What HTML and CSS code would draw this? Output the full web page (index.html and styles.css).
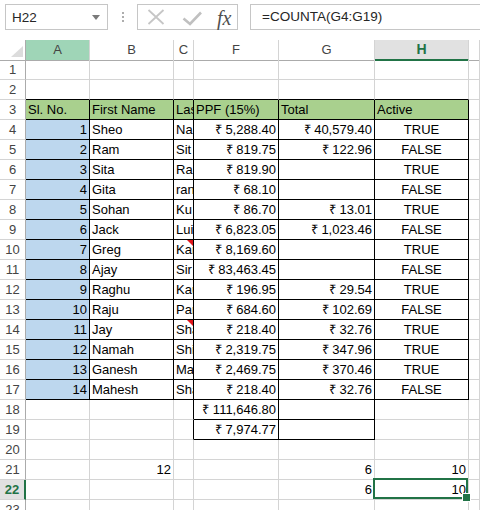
FILE: index.html
```html
<!DOCTYPE html>
<html>
<head>
<meta charset="utf-8">
<title>Sheet</title>
<link rel="stylesheet" href="styles.css">
</head>
<body>
<div class="fbar">
  <div class="namebox"><span>H22</span><svg class="dd" width="8" height="5" viewBox="0 0 8 5"><path d="M0 0H8L4 5Z" fill="#7a7a7a"/></svg></div>
  <div class="grip"><i></i><i></i><i></i></div>
  <div class="fxbox">
    <svg class="ix" width="18" height="16" viewBox="0 0 18 16"><path d="M1.5 1L16.5 15M16.5 1L1.5 15" stroke="#c6c6c6" stroke-width="1.8" fill="none"/></svg>
    <svg class="ok" width="20" height="16" viewBox="0 0 20 16"><path d="M1.5 8.5L8 14L19 2.5" stroke="#c0c0c0" stroke-width="2.6" fill="none"/></svg>
    <span class="fx">fx</span>
  </div>
  <div class="formula">=COUNTA(G4:G19)</div>
</div>
<div class="sheet">
  <div class="row">
    <div class="corner"><svg width="12" height="11" viewBox="0 0 12 11"><path d="M12 0V11H0Z" fill="#dcdcdc"/></svg></div>
    <div class="ch cha">A</div><div class="ch">B</div><div class="ch">C</div><div class="ch">F</div><div class="ch">G</div><div class="ch chs">H</div><div class="ch"></div>
  </div>
  <div class="row"><div class="rh">1</div><div class="c"></div><div class="c"></div><div class="c"></div><div class="c"></div><div class="c"></div><div class="c"></div><div class="c"></div></div>
  <div class="row"><div class="rh">2</div><div class="c bb"></div><div class="c bb"></div><div class="c bb"></div><div class="c bb"></div><div class="c bb"></div><div class="c bb"></div><div class="c"></div></div>
  <div class="row"><div class="rh">3</div><div class="c bk hd">Sl. No.</div><div class="c bk hd">First Name</div><div class="c bk hd clip">Las</div><div class="c bk hd">PPF (15%)</div><div class="c bk hd">Total</div><div class="c bk hd">Active</div><div class="c"></div></div>
  <div class="row"><div class="rh">4</div><div class="c bk sl r">1</div><div class="c bk">Sheo</div><div class="c bk clip">Na</div><div class="c bk r">₹ 5,288.40</div><div class="c bk r">₹ 40,579.40</div><div class="c bk ctr">TRUE</div><div class="c"></div></div>
  <div class="row"><div class="rh">5</div><div class="c bk sl r">2</div><div class="c bk">Ram</div><div class="c bk clip">Sit</div><div class="c bk r">₹ 819.75</div><div class="c bk r">₹ 122.96</div><div class="c bk ctr">FALSE</div><div class="c"></div></div>
  <div class="row"><div class="rh">6</div><div class="c bk sl r">3</div><div class="c bk">Sita</div><div class="c bk clip">Ra</div><div class="c bk r">₹ 819.90</div><div class="c bk r"></div><div class="c bk ctr">TRUE</div><div class="c"></div></div>
  <div class="row"><div class="rh">7</div><div class="c bk sl r">4</div><div class="c bk">Gita</div><div class="c bk clip">ran</div><div class="c bk r">₹ 68.10</div><div class="c bk r"></div><div class="c bk ctr">FALSE</div><div class="c"></div></div>
  <div class="row"><div class="rh">8</div><div class="c bk sl r">5</div><div class="c bk">Sohan</div><div class="c bk clip">Ku</div><div class="c bk r">₹ 86.70</div><div class="c bk r">₹ 13.01</div><div class="c bk ctr">TRUE</div><div class="c"></div></div>
  <div class="row"><div class="rh">9</div><div class="c bk sl r">6</div><div class="c bk">Jack</div><div class="c bk clip">Lui</div><div class="c bk r">₹ 6,823.05</div><div class="c bk r">₹ 1,023.46</div><div class="c bk ctr">FALSE</div><div class="c"></div></div>
  <div class="row"><div class="rh">10</div><div class="c bk sl r">7</div><div class="c bk">Greg</div><div class="c bk clip cm">Kar</div><div class="c bk r">₹ 8,169.60</div><div class="c bk r"></div><div class="c bk ctr">TRUE</div><div class="c"></div></div>
  <div class="row"><div class="rh">11</div><div class="c bk sl r">8</div><div class="c bk">Ajay</div><div class="c bk clip">Sir</div><div class="c bk r">₹ 83,463.45</div><div class="c bk r"></div><div class="c bk ctr">FALSE</div><div class="c"></div></div>
  <div class="row"><div class="rh">12</div><div class="c bk sl r">9</div><div class="c bk">Raghu</div><div class="c bk clip">Kau</div><div class="c bk r">₹ 196.95</div><div class="c bk r">₹ 29.54</div><div class="c bk ctr">TRUE</div><div class="c"></div></div>
  <div class="row"><div class="rh">13</div><div class="c bk sl r">10</div><div class="c bk">Raju</div><div class="c bk clip">Par</div><div class="c bk r">₹ 684.60</div><div class="c bk r">₹ 102.69</div><div class="c bk ctr">FALSE</div><div class="c"></div></div>
  <div class="row"><div class="rh">14</div><div class="c bk sl r">11</div><div class="c bk">Jay</div><div class="c bk clip cm">Sha</div><div class="c bk r">₹ 218.40</div><div class="c bk r">₹ 32.76</div><div class="c bk ctr">TRUE</div><div class="c"></div></div>
  <div class="row"><div class="rh">15</div><div class="c bk sl r">12</div><div class="c bk">Namah</div><div class="c bk clip">Shi</div><div class="c bk r">₹ 2,319.75</div><div class="c bk r">₹ 347.96</div><div class="c bk ctr">TRUE</div><div class="c"></div></div>
  <div class="row"><div class="rh">16</div><div class="c bk sl r">13</div><div class="c bk">Ganesh</div><div class="c bk clip">Ma</div><div class="c bk r">₹ 2,469.75</div><div class="c bk r">₹ 370.46</div><div class="c bk ctr">TRUE</div><div class="c"></div></div>
  <div class="row"><div class="rh">17</div><div class="c bk sl r">14</div><div class="c bk">Mahesh</div><div class="c bk clip">Sha</div><div class="c bk r">₹ 218.40</div><div class="c bk r">₹ 32.76</div><div class="c bk ctr">FALSE</div><div class="c"></div></div>
  <div class="row"><div class="rh">18</div><div class="c"></div><div class="c"></div><div class="c br"></div><div class="c bk r">₹ 111,646.80</div><div class="c bk"></div><div class="c"></div><div class="c"></div></div>
  <div class="row"><div class="rh">19</div><div class="c"></div><div class="c"></div><div class="c br"></div><div class="c bk r">₹ 7,974.77</div><div class="c bk"></div><div class="c"></div><div class="c"></div></div>
  <div class="row"><div class="rh">20</div><div class="c"></div><div class="c"></div><div class="c"></div><div class="c"></div><div class="c"></div><div class="c"></div><div class="c"></div></div>
  <div class="row"><div class="rh">21</div><div class="c"></div><div class="c r">12</div><div class="c"></div><div class="c"></div><div class="c r">6</div><div class="c r">10</div><div class="c"></div></div>
  <div class="row"><div class="rh rhs">22</div><div class="c"></div><div class="c"></div><div class="c"></div><div class="c"></div><div class="c r">6</div><div class="c r sel">10</div><div class="c"></div></div>
  <div class="row"><div class="rh">23</div><div class="c"></div><div class="c"></div><div class="c"></div><div class="c"></div><div class="c"></div><div class="c"></div><div class="c"></div></div>
</div>
</body>
</html>
```
FILE: styles.css
```css
* { box-sizing: border-box; }
html, body { margin: 0; padding: 0; background: #fff; }
body {
  width: 480px;
  height: 510px;
  overflow: hidden;
  font-family: "Liberation Sans", Arial, sans-serif;
  font-size: 13px;
  color: #000;
}

/* formula bar */
.fbar {
  height: 40px;
  display: flex;
  align-items: flex-start;
  padding-top: 4px;
}
.namebox {
  margin-left: 5px;
  width: 103px;
  height: 26px;
  border: 1px solid #c6c6c6;
  display: flex;
  align-items: center;
  padding: 0 6px 0 6px;
  color: #262626;
  font-size: 13.5px;
}
.namebox .dd { margin-left: auto; margin-right: 1px; }
.grip {
  width: 29px;
  height: 26px;
  display: flex;
  flex-direction: column;
  align-items: center;
  justify-content: center;
  gap: 2px;
}
.grip i { display: block; width: 2px; height: 2px; background: #adadad; }
.fxbox {
  width: 101px;
  height: 26px;
  border: 1px solid #c6c6c6;
  display: flex;
  align-items: center;
  padding-left: 9px;
}
.fxbox .ok { margin-left: 17px; margin-top: 1px; }
.fxbox .fx {
  margin-left: 15px;
  font-family: "Liberation Serif", "Times New Roman", serif;
  font-style: italic;
  font-size: 20px;
  color: #505050;
  line-height: 20px;
  margin-top: 2px;
}
.formula {
  margin-left: 12px;
  flex: 1;
  margin-right: -12px;
  height: 26px;
  border: 1px solid #c6c6c6;
  padding-left: 11px;
  line-height: 24px;
  font-size: 13.5px;
  color: #262626;
}

/* sheet */
.row {
  display: grid;
  grid-template-columns: 26px 64px 84px 20px 85px 96px 94px 1fr;
  height: 20px;
}
.c, .rh, .ch, .corner {
  border-right: 1px solid #d4d4d4;
  border-bottom: 1px solid #d4d4d4;
  white-space: nowrap;
  line-height: 19px;
  padding: 0 2px;
  position: relative;
}
.corner { border-right-color: #ababab; border-bottom-color: #ababab; display: flex; align-items: flex-end; justify-content: flex-end; padding: 0 2px 3px 0; }
.corner svg { display: block; }
.ch {
  text-align: center;
  color: #444;
  border-bottom-color: #ababab;
}
.cha { background: #9fd5b7; }
.chs {
  background: #e1e1e1;
  color: #217346;
  font-weight: bold;
  border-bottom: 2px solid #217346;
  font-size: 14px;
}
.rh {
  text-align: center;
  color: #444;
  border-right-color: #ababab;
  padding: 0;
}
.rhs {
  background: #e1e1e1;
  color: #217346;
  font-weight: bold;
  border-right: 2px solid #217346;
}

.clip { overflow: hidden; text-overflow: clip; }
.r { text-align: right; }
.ctr { text-align: center; }
.hd { background: #a9d08e; }
.sl { background: #bdd7ee; }
.bk { border-right-color: #000; border-bottom-color: #000; }
.bb { border-bottom-color: #000; }
.br { border-right-color: #000; }

.cm::after {
  content: "";
  position: absolute;
  top: 0;
  right: 0;
  border-top: 6px solid #e0151b;
  border-left: 6px solid transparent;
}

.sel::after {
  content: "";
  position: absolute;
  left: -2px;
  top: -2px;
  right: 0;
  bottom: 0;
  border: 2px solid #217346;
}
.sel::before {
  content: "";
  position: absolute;
  right: -3px;
  bottom: -3px;
  width: 7px;
  height: 7px;
  background: #217346;
  border: 1px solid #fff;
  z-index: 1;
}
```
